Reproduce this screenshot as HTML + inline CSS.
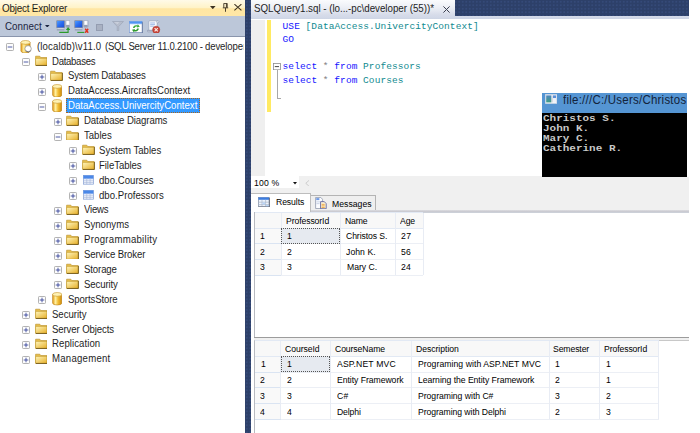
<!DOCTYPE html>
<html><head><meta charset="utf-8"><title>SQL Server Management Studio</title>
<style>
html,body{margin:0;padding:0;background:#fff;}
body{width:700px;height:433px;position:relative;overflow:hidden;}
#app>div,#app>svg,#app>span{position:absolute;display:block;}
.t{white-space:pre;line-height:14px;height:14px;transform-origin:0 50%;}
.s{font-family:"Liberation Sans", sans-serif;}
.m{font-family:"Liberation Mono", monospace;}
</style></head><body>
<svg width="0" height="0" style="position:absolute"><defs>
<linearGradient id="gf" x1="0" y1="0" x2="1" y2="1"><stop offset="0" stop-color="#fff6bd"/><stop offset="1" stop-color="#e6ae26"/></linearGradient>
<linearGradient id="gs" x1="0" y1="0" x2="1" y2="1"><stop offset="0" stop-color="#4c9cff"/><stop offset=".5" stop-color="#2a6cf0"/><stop offset="1" stop-color="#1a4fd8"/></linearGradient>
<linearGradient id="gc" x1="0" y1="0" x2="0" y2="1"><stop offset="0" stop-color="#4f86c0"/><stop offset="1" stop-color="#3f9c84"/></linearGradient>
<linearGradient id="gd" x1="0" y1="0" x2="1" y2="0"><stop offset="0" stop-color="#e39a14"/><stop offset=".32" stop-color="#fff0a0"/><stop offset=".6" stop-color="#f2bd34"/><stop offset="1" stop-color="#cc8a0c"/></linearGradient>
<g id="folder"><path d="M6 12h42l10 14h64v78H6z" fill="#e9c04d" stroke="#b48a22" stroke-width="6"/><path d="M6 34h116v70H6z" fill="url(#gf)" stroke="#c39a2c" stroke-width="6"/><path d="M124 30v76H10" fill="none" stroke="#5a4412" stroke-width="7"/></g>
<g id="db"><path d="M6 24v86a46 20 0 0 0 92 0V24z" fill="url(#gd)" stroke="#b8801a" stroke-width="6"/><ellipse cx="52" cy="24" rx="46" ry="19" fill="#fff2b4" stroke="#c4922a" stroke-width="6"/></g>
<g id="table"><rect x="4" y="4" width="96" height="82" fill="#f4f7fd" stroke="#86a0d4" stroke-width="7"/><rect x="4" y="4" width="96" height="32" fill="#4a88e8"/><path d="M4 36h96" stroke="#9fc0f5" stroke-width="6"/><path d="M4 54h96M4 70h96M36 30v56M68 30v56" stroke="#a5b6da" stroke-width="6"/></g>
</defs></svg>
<div id="app">
<div style="left:0.00px;top:0.00px;width:245.70px;height:15.70px;background:linear-gradient(#fffae8 0%,#fff3c8 47%,#ffe6a3 55%,#ffe7a6 100%);"></div>
<div style="left:0.00px;top:15.70px;width:245.70px;height:21.10px;background:#bcc7d9;"></div>
<div style="left:0.00px;top:36.30px;width:245.70px;height:1.20px;background:linear-gradient(#7a86a0,#9aa4b8);"></div>
<div style="left:0.00px;top:37.30px;width:245.20px;height:396.00px;background:#fff;"></div>
<svg style="left:45.2px;top:24.6px" width="4.6" height="2.6" viewBox="0 0 46 26"><path d="M0 0h46L23 26z" fill="#1b2540"/></svg>
<svg style="left:210px;top:5.7px" width="5.6" height="3.2" viewBox="0 0 56 32"><path d="M0 0h56L28 32z" fill="#3d3222"/></svg>
<svg style="left:221.6px;top:3.4px" width="7" height="9" viewBox="0 0 70 86" preserveAspectRatio="none"><path d="M18 4h34v40M18 4v40M8 46h54M35 46v38M44 4v40" fill="none" stroke="#3d3222" stroke-width="9"/></svg>
<svg style="left:234.2px;top:4.2px" width="7.8" height="6.6" viewBox="0 0 78 66"><path d="M4 2L74 64M74 2L4 64" fill="none" stroke="#3d3222" stroke-width="11"/></svg>
<svg style="left:56.0px;top:19.6px" width="14.4" height="13.4" viewBox="0 0 144 134"><rect x="3" y="3" width="86" height="80" rx="7" fill="#7e89a3"/><rect x="11" y="10" width="70" height="63" fill="url(#gs)"/><rect x="14" y="84" width="64" height="9" fill="#e3e6ee"/><rect x="8" y="93" width="76" height="11" fill="#8e98ad"/><rect x="97" y="3" width="43" height="68" rx="6" fill="#e3e7ef" stroke="#8c96ac" stroke-width="6"/><rect x="108" y="12" width="20" height="32" fill="#fff"/><rect x="101" y="52" width="35" height="15" fill="#7f8aa4"/><path d="M33 124H121V96" fill="none" stroke="#2b9a2b" stroke-width="11"/><path d="M98 99L121 70 144 99z" fill="#2b9a2b"/></svg>
<svg style="left:74.4px;top:19.6px" width="14.4" height="13.4" viewBox="0 0 144 134"><rect x="3" y="3" width="86" height="80" rx="7" fill="#7e89a3"/><rect x="11" y="10" width="70" height="63" fill="url(#gs)"/><rect x="14" y="84" width="64" height="9" fill="#e3e6ee"/><rect x="8" y="93" width="76" height="11" fill="#8e98ad"/><rect x="97" y="3" width="43" height="68" rx="6" fill="#e3e7ef" stroke="#8c96ac" stroke-width="6"/><rect x="108" y="12" width="20" height="32" fill="#fff"/><rect x="101" y="52" width="35" height="15" fill="#7f8aa4"/><path d="M33 124H104" fill="none" stroke="#2b9a2b" stroke-width="11"/><path d="M112 88l30 40M142 88l-30 40" stroke="#e3301c" stroke-width="14"/></svg>
<div style="left:95.60px;top:23.70px;width:7.30px;height:7.00px;background:#a9b1c2;border:1px solid #949db1;box-sizing:border-box"></div>
<svg style="left:111.6px;top:20.9px" width="12" height="10.6" viewBox="0 0 120 106"><path d="M5 5h110L68 54v42l-16 6V54z" fill="#b6bdcc" stroke="#9aa3b6" stroke-width="6"/><path d="M22 12h50L56 30z" fill="#cfd5e0"/></svg>
<svg style="left:129.2px;top:20.5px" width="13.8" height="12.4" viewBox="0 0 138 124"><rect x="4" y="4" width="128" height="114" fill="#fff" stroke="#7f9fd8" stroke-width="7"/><rect x="4" y="4" width="128" height="24" fill="#4f94f2"/><path d="M4 30h128" stroke="#9cc2f8" stroke-width="5"/><path d="M134 12v108H8" fill="none" stroke="#5d6c8c" stroke-width="7"/><path d="M40 70c0-22 22-34 44-26l4-12 20 26-30 8 4-10c-12-4-24 2-26 14z" fill="#39a83a"/><path d="M98 76c0 22-22 34-44 26l-4 12-20-26 30-8-4 10c12 4 24-2 26-14z" fill="#2f9a30"/></svg>
<svg style="left:147.4px;top:19.8px" width="13.6" height="13.2" viewBox="0 0 136 132"><path d="M24 8h84c14 0 16 18 2 20h-8v76H18V30c0-12 0-22 6-22z" fill="#f6f8fc" stroke="#8f9ab2" stroke-width="6"/><path d="M102 28c-10-4-8-20 6-20" fill="none" stroke="#8f9ab2" stroke-width="6"/><path d="M32 30h48M32 46h48M32 62h36" stroke="#7ea2e0" stroke-width="7"/><path d="M4 104h92c6 0 6 14 0 14H12c-8 0-12-6-8-14z" fill="#dfe4ee" stroke="#7f8aa3" stroke-width="6"/><circle cx="92" cy="98" r="36" fill="#c8453a" stroke="#a93226" stroke-width="5"/><path d="M76 82l32 32M108 82l-32 32" stroke="#fbe9e4" stroke-width="12"/></svg>
<svg style="left:6.25px;top:43.20px" width="8" height="8" viewBox="0 0 80 80"><rect x="5" y="5" width="70" height="70" rx="8" fill="#fdfdfd" stroke="#a0a0a0" stroke-width="8"/><path d="M17 40h46" stroke="#1a2a8c" stroke-width="7.5"/></svg>
<svg style="left:20.15px;top:39.60px" width="12.6" height="13.4" viewBox="0 0 120 134"><use href="#db"/><circle cx="78" cy="88" r="32" fill="#fff" stroke="#888" stroke-width="7"/><path d="M56 108a32 32 0 0 0 46 0" fill="none" stroke="#666" stroke-width="8"/></svg>
<svg style="left:22.00px;top:58.09px" width="8" height="8" viewBox="0 0 80 80"><rect x="5" y="5" width="70" height="70" rx="8" fill="#fdfdfd" stroke="#a0a0a0" stroke-width="8"/><path d="M17 40h46" stroke="#1a2a8c" stroke-width="7.5"/></svg>
<svg style="left:34.65px;top:55.09px" width="12.8" height="10.9" viewBox="0 0 128 110" preserveAspectRatio="none"><use href="#folder"/></svg>
<svg style="left:37.75px;top:72.97px" width="8" height="8" viewBox="0 0 80 80"><rect x="5" y="5" width="70" height="70" rx="8" fill="#fdfdfd" stroke="#a0a0a0" stroke-width="8"/><path d="M17 40h46M40 17v46" stroke="#1a2a8c" stroke-width="7.5"/></svg>
<svg style="left:50.35px;top:69.97px" width="12.8" height="10.9" viewBox="0 0 128 110" preserveAspectRatio="none"><use href="#folder"/></svg>
<svg style="left:37.75px;top:87.86px" width="8" height="8" viewBox="0 0 80 80"><rect x="5" y="5" width="70" height="70" rx="8" fill="#fdfdfd" stroke="#a0a0a0" stroke-width="8"/><path d="M17 40h46M40 17v46" stroke="#1a2a8c" stroke-width="7.5"/></svg>
<svg style="left:51.55px;top:83.91px" width="10.4" height="13.4" viewBox="0 0 104 134"><use href="#db"/></svg>
<svg style="left:37.75px;top:102.74px" width="8" height="8" viewBox="0 0 80 80"><rect x="5" y="5" width="70" height="70" rx="8" fill="#fdfdfd" stroke="#a0a0a0" stroke-width="8"/><path d="M17 40h46" stroke="#1a2a8c" stroke-width="7.5"/></svg>
<svg style="left:51.55px;top:98.79px" width="10.4" height="13.4" viewBox="0 0 104 134"><use href="#db"/></svg>
<div style="left:66.00px;top:98.10px;width:133.60px;height:15.00px;background:#3399ff;outline:1px dotted #a8651e;outline-offset:-1px"></div>
<svg style="left:53.50px;top:117.62px" width="8" height="8" viewBox="0 0 80 80"><rect x="5" y="5" width="70" height="70" rx="8" fill="#fdfdfd" stroke="#a0a0a0" stroke-width="8"/><path d="M17 40h46M40 17v46" stroke="#1a2a8c" stroke-width="7.5"/></svg>
<svg style="left:66.05px;top:114.62px" width="12.8" height="10.9" viewBox="0 0 128 110" preserveAspectRatio="none"><use href="#folder"/></svg>
<svg style="left:53.50px;top:132.51px" width="8" height="8" viewBox="0 0 80 80"><rect x="5" y="5" width="70" height="70" rx="8" fill="#fdfdfd" stroke="#a0a0a0" stroke-width="8"/><path d="M17 40h46" stroke="#1a2a8c" stroke-width="7.5"/></svg>
<svg style="left:66.05px;top:129.51px" width="12.8" height="10.9" viewBox="0 0 128 110" preserveAspectRatio="none"><use href="#folder"/></svg>
<svg style="left:69.25px;top:147.39px" width="8" height="8" viewBox="0 0 80 80"><rect x="5" y="5" width="70" height="70" rx="8" fill="#fdfdfd" stroke="#a0a0a0" stroke-width="8"/><path d="M17 40h46M40 17v46" stroke="#1a2a8c" stroke-width="7.5"/></svg>
<svg style="left:81.75px;top:144.39px" width="12.8" height="10.9" viewBox="0 0 128 110" preserveAspectRatio="none"><use href="#folder"/></svg>
<svg style="left:69.25px;top:162.28px" width="8" height="8" viewBox="0 0 80 80"><rect x="5" y="5" width="70" height="70" rx="8" fill="#fdfdfd" stroke="#a0a0a0" stroke-width="8"/><path d="M17 40h46M40 17v46" stroke="#1a2a8c" stroke-width="7.5"/></svg>
<svg style="left:81.75px;top:159.28px" width="12.8" height="10.9" viewBox="0 0 128 110" preserveAspectRatio="none"><use href="#folder"/></svg>
<svg style="left:69.25px;top:177.17px" width="8" height="8" viewBox="0 0 80 80"><rect x="5" y="5" width="70" height="70" rx="8" fill="#fdfdfd" stroke="#a0a0a0" stroke-width="8"/><path d="M17 40h46M40 17v46" stroke="#1a2a8c" stroke-width="7.5"/></svg>
<svg style="left:82.95px;top:175.07px" width="10.8" height="9.6" viewBox="0 0 104 90" preserveAspectRatio="none"><use href="#table"/></svg>
<svg style="left:69.25px;top:192.05px" width="8" height="8" viewBox="0 0 80 80"><rect x="5" y="5" width="70" height="70" rx="8" fill="#fdfdfd" stroke="#a0a0a0" stroke-width="8"/><path d="M17 40h46M40 17v46" stroke="#1a2a8c" stroke-width="7.5"/></svg>
<svg style="left:82.95px;top:189.95px" width="10.8" height="9.6" viewBox="0 0 104 90" preserveAspectRatio="none"><use href="#table"/></svg>
<svg style="left:53.50px;top:206.94px" width="8" height="8" viewBox="0 0 80 80"><rect x="5" y="5" width="70" height="70" rx="8" fill="#fdfdfd" stroke="#a0a0a0" stroke-width="8"/><path d="M17 40h46M40 17v46" stroke="#1a2a8c" stroke-width="7.5"/></svg>
<svg style="left:66.05px;top:203.94px" width="12.8" height="10.9" viewBox="0 0 128 110" preserveAspectRatio="none"><use href="#folder"/></svg>
<svg style="left:53.50px;top:221.82px" width="8" height="8" viewBox="0 0 80 80"><rect x="5" y="5" width="70" height="70" rx="8" fill="#fdfdfd" stroke="#a0a0a0" stroke-width="8"/><path d="M17 40h46M40 17v46" stroke="#1a2a8c" stroke-width="7.5"/></svg>
<svg style="left:66.05px;top:218.82px" width="12.8" height="10.9" viewBox="0 0 128 110" preserveAspectRatio="none"><use href="#folder"/></svg>
<svg style="left:53.50px;top:236.70px" width="8" height="8" viewBox="0 0 80 80"><rect x="5" y="5" width="70" height="70" rx="8" fill="#fdfdfd" stroke="#a0a0a0" stroke-width="8"/><path d="M17 40h46M40 17v46" stroke="#1a2a8c" stroke-width="7.5"/></svg>
<svg style="left:66.05px;top:233.70px" width="12.8" height="10.9" viewBox="0 0 128 110" preserveAspectRatio="none"><use href="#folder"/></svg>
<svg style="left:53.50px;top:251.59px" width="8" height="8" viewBox="0 0 80 80"><rect x="5" y="5" width="70" height="70" rx="8" fill="#fdfdfd" stroke="#a0a0a0" stroke-width="8"/><path d="M17 40h46M40 17v46" stroke="#1a2a8c" stroke-width="7.5"/></svg>
<svg style="left:66.05px;top:248.59px" width="12.8" height="10.9" viewBox="0 0 128 110" preserveAspectRatio="none"><use href="#folder"/></svg>
<svg style="left:53.50px;top:266.48px" width="8" height="8" viewBox="0 0 80 80"><rect x="5" y="5" width="70" height="70" rx="8" fill="#fdfdfd" stroke="#a0a0a0" stroke-width="8"/><path d="M17 40h46M40 17v46" stroke="#1a2a8c" stroke-width="7.5"/></svg>
<svg style="left:66.05px;top:263.48px" width="12.8" height="10.9" viewBox="0 0 128 110" preserveAspectRatio="none"><use href="#folder"/></svg>
<svg style="left:53.50px;top:281.36px" width="8" height="8" viewBox="0 0 80 80"><rect x="5" y="5" width="70" height="70" rx="8" fill="#fdfdfd" stroke="#a0a0a0" stroke-width="8"/><path d="M17 40h46M40 17v46" stroke="#1a2a8c" stroke-width="7.5"/></svg>
<svg style="left:66.05px;top:278.36px" width="12.8" height="10.9" viewBox="0 0 128 110" preserveAspectRatio="none"><use href="#folder"/></svg>
<svg style="left:37.75px;top:296.25px" width="8" height="8" viewBox="0 0 80 80"><rect x="5" y="5" width="70" height="70" rx="8" fill="#fdfdfd" stroke="#a0a0a0" stroke-width="8"/><path d="M17 40h46M40 17v46" stroke="#1a2a8c" stroke-width="7.5"/></svg>
<svg style="left:51.55px;top:292.30px" width="10.4" height="13.4" viewBox="0 0 104 134"><use href="#db"/></svg>
<svg style="left:22.00px;top:311.13px" width="8" height="8" viewBox="0 0 80 80"><rect x="5" y="5" width="70" height="70" rx="8" fill="#fdfdfd" stroke="#a0a0a0" stroke-width="8"/><path d="M17 40h46M40 17v46" stroke="#1a2a8c" stroke-width="7.5"/></svg>
<svg style="left:34.65px;top:308.13px" width="12.8" height="10.9" viewBox="0 0 128 110" preserveAspectRatio="none"><use href="#folder"/></svg>
<svg style="left:22.00px;top:326.01px" width="8" height="8" viewBox="0 0 80 80"><rect x="5" y="5" width="70" height="70" rx="8" fill="#fdfdfd" stroke="#a0a0a0" stroke-width="8"/><path d="M17 40h46M40 17v46" stroke="#1a2a8c" stroke-width="7.5"/></svg>
<svg style="left:34.65px;top:323.01px" width="12.8" height="10.9" viewBox="0 0 128 110" preserveAspectRatio="none"><use href="#folder"/></svg>
<svg style="left:22.00px;top:340.90px" width="8" height="8" viewBox="0 0 80 80"><rect x="5" y="5" width="70" height="70" rx="8" fill="#fdfdfd" stroke="#a0a0a0" stroke-width="8"/><path d="M17 40h46M40 17v46" stroke="#1a2a8c" stroke-width="7.5"/></svg>
<svg style="left:34.65px;top:337.90px" width="12.8" height="10.9" viewBox="0 0 128 110" preserveAspectRatio="none"><use href="#folder"/></svg>
<svg style="left:22.00px;top:355.78px" width="8" height="8" viewBox="0 0 80 80"><rect x="5" y="5" width="70" height="70" rx="8" fill="#fdfdfd" stroke="#a0a0a0" stroke-width="8"/><path d="M17 40h46M40 17v46" stroke="#1a2a8c" stroke-width="7.5"/></svg>
<svg style="left:34.65px;top:352.78px" width="12.8" height="10.9" viewBox="0 0 128 110" preserveAspectRatio="none"><use href="#folder"/></svg>
<div style="left:245.30px;top:0.00px;width:5.60px;height:433.00px;background:radial-gradient(circle,#354a79 0.6px,rgba(53,74,121,0) 1.1px) 0 0/3.5px 3.5px,#2d4069;"></div>
<div style="left:251.00px;top:0.00px;width:438.30px;height:16.10px;background:radial-gradient(circle,#354a79 0.6px,rgba(53,74,121,0) 1.1px) 0 0/3.5px 3.5px,#2d4069;"></div>
<div style="left:251.00px;top:16.10px;width:438.30px;height:3.40px;background:linear-gradient(#d6dcea,#cdd4e4);"></div>
<div style="left:251.00px;top:0.00px;width:203.90px;height:16.60px;background:linear-gradient(#fafbfd 0%,#eceff5 45%,#d6dbe9 88%,#d3d9e8 100%);"></div>
<svg style="left:443.4px;top:5.8px" width="7" height="7" viewBox="0 0 70 70"><path d="M4 4l62 62M66 4L4 66" stroke="#3a3f4f" stroke-width="10"/></svg>
<div style="left:251.00px;top:19.50px;width:438.30px;height:156.60px;background:#fff;"></div>
<div style="left:251.00px;top:19.50px;width:13.60px;height:156.20px;background:#efefef;"></div>
<div style="left:266.70px;top:19.50px;width:4.40px;height:92.00px;background:#ffea62;"></div>
<svg style="left:273px;top:63px" width="7.8" height="7.2" viewBox="0 0 78 72"><rect x="4" y="4" width="70" height="64" fill="#fff" stroke="#8c8c8c" stroke-width="8"/><path d="M18 36h42" stroke="#333" stroke-width="9"/></svg>
<div style="left:277.00px;top:70.00px;width:0.90px;height:28.80px;background:#a8a8a8;"></div>
<div style="left:277.00px;top:98.00px;width:3.80px;height:0.90px;background:#a8a8a8;"></div>
<div style="left:542.00px;top:93.10px;width:144.60px;height:19.60px;background:#5595d3;"></div>
<div style="left:542.00px;top:112.60px;width:144.60px;height:64.10px;background:#000;"></div>
<svg style="left:544.6px;top:93.9px" width="12.2" height="9.9" viewBox="0 0 122 99"><rect x="3" y="3" width="116" height="93" fill="#f4f6fa" stroke="#c9d2e0" stroke-width="6"/><rect x="12" y="14" width="52" height="70" fill="url(#gc)"/><rect x="68" y="14" width="8" height="70" fill="#c9ccd4"/><rect x="80" y="14" width="30" height="28" fill="#5b8fd8"/><rect x="80" y="42" width="30" height="42" fill="#eef2f8"/></svg>
<div style="left:251.00px;top:176.10px;width:291.00px;height:12.00px;background:#f0f0f0;"></div>
<div style="left:542.00px;top:176.60px;width:147.30px;height:11.50px;background:#f0f0f0;"></div>
<div style="left:251.00px;top:176.40px;width:48.30px;height:11.50px;background:#fff;"></div>
<svg style="left:292.9px;top:182.2px" width="4" height="2.4" viewBox="0 0 40 24"><path d="M0 0h40L20 24z" fill="#111"/></svg>
<svg style="left:305.4px;top:179.6px" width="4.4" height="6.6" viewBox="0 0 44 66"><path d="M40 4L8 33l32 29" fill="none" stroke="#c3c3c3" stroke-width="8"/></svg>
<div style="left:251.00px;top:188.00px;width:438.30px;height:24.40px;background:#f0f0f0;"></div>
<div style="left:251.00px;top:193.20px;width:59.70px;height:19.20px;background:#fff;border:1px solid #bdbdbd;border-left:none;border-bottom:none;box-sizing:border-box"></div>
<div style="left:310.70px;top:194.90px;width:65.20px;height:16.50px;background:#efefef;border:1px solid #b4b4b4;border-left:none;border-bottom:none;box-sizing:border-box"></div>
<div style="left:310.70px;top:210.40px;width:378.60px;height:2.60px;background:linear-gradient(#dcdce0,#c8c8cf 60%,#d8d8dc);"></div>
<svg style="left:258.2px;top:196.5px" width="11.8" height="10.6" viewBox="0 0 118 106"><rect x="4" y="4" width="108" height="94" fill="#eef4fd" stroke="#8c96aa" stroke-width="8"/><rect x="4" y="4" width="108" height="24" fill="#3c7de0"/><path d="M4 52h108M4 76h108M40 28v70M76 28v70" stroke="#a9b4c8" stroke-width="7"/><rect x="44" y="56" width="28" height="16" fill="#b9d6fa"/><rect x="80" y="80" width="28" height="14" fill="#b9d6fa"/><path d="M114 10v90H8" fill="none" stroke="#5b6170" stroke-width="8"/></svg>
<svg style="left:315.3px;top:196.9px" width="11.8" height="12.2" viewBox="0 0 114 110" preserveAspectRatio="none"><path d="M6 4h50l16 16v84H6z" fill="#fbfcff" stroke="#8a93a8" stroke-width="7"/><rect x="12" y="10" width="30" height="18" fill="#6f9be6"/><path d="M14 44h36M14 60h30" stroke="#b8c4dc" stroke-width="7"/><path d="M54 42h36l18 18v46H54z" fill="#fff6d6" stroke="#5a5f9a" stroke-width="8"/><path d="M64 66h30M64 80h30M64 94h30" stroke="#e89a32" stroke-width="8"/></svg>
<div style="left:251.00px;top:212.30px;width:438.30px;height:125.00px;background:#fff;"></div>
<div style="left:254.00px;top:212.10px;width:1.00px;height:125.00px;background:#b8bac0;"></div>
<div style="left:254.90px;top:212.10px;width:434.40px;height:0.80px;background:#ccd0d8;"></div>
<div style="left:254.90px;top:212.60px;width:168.10px;height:15.60px;background:#f8f8f8;"></div>
<div style="left:254.90px;top:228.20px;width:26.10px;height:46.80px;background:#f9f9f9;"></div>
<div style="left:254.90px;top:212.20px;width:168.10px;height:0.90px;background:#e2e9f4;"></div>
<div style="left:254.90px;top:227.80px;width:168.10px;height:0.90px;background:#e2e9f4;"></div>
<div style="left:254.90px;top:243.40px;width:168.10px;height:0.90px;background:#eceff5;"></div>
<div style="left:254.90px;top:243.40px;width:26.10px;height:0.90px;background:#dae4f2;"></div>
<div style="left:254.90px;top:259.00px;width:168.10px;height:0.90px;background:#eceff5;"></div>
<div style="left:254.90px;top:259.00px;width:26.10px;height:0.90px;background:#dae4f2;"></div>
<div style="left:254.90px;top:274.60px;width:168.10px;height:0.90px;background:#eceff5;"></div>
<div style="left:254.90px;top:274.60px;width:26.10px;height:0.90px;background:#dae4f2;"></div>
<div style="left:280.60px;top:212.60px;width:0.90px;height:62.40px;background:#e8ecf4;"></div>
<div style="left:340.10px;top:212.60px;width:0.90px;height:62.40px;background:#e8ecf4;"></div>
<div style="left:394.80px;top:212.60px;width:0.90px;height:62.40px;background:#e8ecf4;"></div>
<div style="left:422.60px;top:212.60px;width:0.90px;height:62.40px;background:#e8ecf4;"></div>
<div style="left:280.80px;top:227.70px;width:59.70px;height:16.20px;background:#e6eaf0;outline:1px dotted #555;outline-offset:-1px"></div>
<div style="left:254.00px;top:336.90px;width:435.30px;height:3.60px;background:#f0f0f0;"></div>
<div style="left:254.00px;top:337.00px;width:435.30px;height:0.90px;background:#9c9c9c;"></div>
<div style="left:254.00px;top:340.20px;width:435.30px;height:0.80px;background:#c8c8c8;"></div>
<div style="left:251.00px;top:341.00px;width:438.30px;height:92.00px;background:#fff;"></div>
<div style="left:254.00px;top:341.00px;width:1.00px;height:92.00px;background:#b8bac0;"></div>
<div style="left:254.90px;top:340.60px;width:403.90px;height:15.72px;background:#f8f8f8;"></div>
<div style="left:254.90px;top:356.32px;width:25.85px;height:62.88px;background:#f9f9f9;"></div>
<div style="left:254.90px;top:340.20px;width:403.90px;height:0.90px;background:#e2e9f4;"></div>
<div style="left:254.90px;top:355.92px;width:403.90px;height:0.90px;background:#e2e9f4;"></div>
<div style="left:254.90px;top:371.64px;width:403.90px;height:0.90px;background:#eceff5;"></div>
<div style="left:254.90px;top:371.64px;width:25.85px;height:0.90px;background:#dae4f2;"></div>
<div style="left:254.90px;top:387.36px;width:403.90px;height:0.90px;background:#eceff5;"></div>
<div style="left:254.90px;top:387.36px;width:25.85px;height:0.90px;background:#dae4f2;"></div>
<div style="left:254.90px;top:403.08px;width:403.90px;height:0.90px;background:#eceff5;"></div>
<div style="left:254.90px;top:403.08px;width:25.85px;height:0.90px;background:#dae4f2;"></div>
<div style="left:254.90px;top:418.80px;width:403.90px;height:0.90px;background:#eceff5;"></div>
<div style="left:254.90px;top:418.80px;width:25.85px;height:0.90px;background:#dae4f2;"></div>
<div style="left:280.35px;top:340.60px;width:0.90px;height:78.60px;background:#e8ecf4;"></div>
<div style="left:330.10px;top:340.60px;width:0.90px;height:78.60px;background:#e8ecf4;"></div>
<div style="left:410.60px;top:340.60px;width:0.90px;height:78.60px;background:#e8ecf4;"></div>
<div style="left:548.60px;top:340.60px;width:0.90px;height:78.60px;background:#e8ecf4;"></div>
<div style="left:598.90px;top:340.60px;width:0.90px;height:78.60px;background:#e8ecf4;"></div>
<div style="left:658.40px;top:340.60px;width:0.90px;height:78.60px;background:#e8ecf4;"></div>
<div style="left:280.55px;top:355.82px;width:49.95px;height:16.32px;background:#e6eaf0;outline:1px dotted #555;outline-offset:-1px"></div>
<span class="t s" style="left:1.50px;top:1.50px;font-size:10.3px;color:#1e1e1e;transform:scaleX(0.96);letter-spacing:-0.217px;">Object Explorer</span>
<span class="t s" style="left:5.00px;top:20.10px;font-size:10.2px;color:#1b2540;transform:scaleX(0.96);letter-spacing:0.054px;">Connect</span>
<span class="t s" style="left:36.70px;top:39.70px;font-size:10px;color:#1e1e1e;transform:scaleX(0.96);letter-spacing:0.141px;">(localdb)\v11.0</span>
<span class="t s" style="left:104.70px;top:39.70px;font-size:10px;color:#1e1e1e;transform:scaleX(0.96);letter-spacing:-0.269px;">(SQL Server 11.0.2100 -</span>
<span class="t s" style="left:205.40px;top:39.70px;font-size:10px;color:#1e1e1e;transform:scaleX(0.96);letter-spacing:-0.126px;width:39.8px;overflow:hidden;">developer-pc\developer)</span>
<span class="t s" style="left:52.30px;top:54.59px;font-size:10px;color:#1e1e1e;transform:scaleX(0.96);letter-spacing:-0.312px;">Databases</span>
<span class="t s" style="left:68.00px;top:69.47px;font-size:10px;color:#1e1e1e;transform:scaleX(0.96);letter-spacing:-0.194px;">System Databases</span>
<span class="t s" style="left:68.00px;top:84.36px;font-size:10px;color:#1e1e1e;transform:scaleX(0.96);letter-spacing:-0.003px;">DataAccess.AircraftsContext</span>
<span class="t s" style="left:68.00px;top:99.24px;font-size:10px;color:#fff;transform:scaleX(0.96);letter-spacing:0.007px;">DataAccess.UnivercityContext</span>
<span class="t s" style="left:83.70px;top:114.12px;font-size:10px;color:#1e1e1e;transform:scaleX(0.96);letter-spacing:-0.094px;">Database Diagrams</span>
<span class="t s" style="left:83.70px;top:129.01px;font-size:10px;color:#1e1e1e;transform:scaleX(0.96);letter-spacing:-0.009px;">Tables</span>
<span class="t s" style="left:99.40px;top:143.89px;font-size:10px;color:#1e1e1e;transform:scaleX(0.96);letter-spacing:-0.004px;">System Tables</span>
<span class="t s" style="left:99.40px;top:158.78px;font-size:10px;color:#1e1e1e;transform:scaleX(0.96);letter-spacing:-0.066px;">FileTables</span>
<span class="t s" style="left:99.40px;top:173.67px;font-size:10px;color:#1e1e1e;transform:scaleX(0.96);letter-spacing:0.016px;">dbo.Courses</span>
<span class="t s" style="left:99.40px;top:188.55px;font-size:10px;color:#1e1e1e;transform:scaleX(0.96);letter-spacing:0.017px;">dbo.Professors</span>
<span class="t s" style="left:83.70px;top:203.44px;font-size:10px;color:#1e1e1e;transform:scaleX(0.96);letter-spacing:-0.217px;">Views</span>
<span class="t s" style="left:83.70px;top:218.32px;font-size:10px;color:#1e1e1e;transform:scaleX(0.96);letter-spacing:0.023px;">Synonyms</span>
<span class="t s" style="left:83.70px;top:233.20px;font-size:10px;color:#1e1e1e;transform:scaleX(0.96);letter-spacing:0.274px;">Programmability</span>
<span class="t s" style="left:83.70px;top:248.09px;font-size:10px;color:#1e1e1e;transform:scaleX(0.96);letter-spacing:-0.123px;">Service Broker</span>
<span class="t s" style="left:83.70px;top:262.98px;font-size:10px;color:#1e1e1e;transform:scaleX(0.96);letter-spacing:-0.124px;">Storage</span>
<span class="t s" style="left:83.70px;top:277.86px;font-size:10px;color:#1e1e1e;transform:scaleX(0.96);letter-spacing:-0.115px;">Security</span>
<span class="t s" style="left:68.00px;top:292.75px;font-size:10px;color:#1e1e1e;transform:scaleX(0.96);letter-spacing:-0.104px;">SportsStore</span>
<span class="t s" style="left:52.30px;top:307.63px;font-size:10px;color:#1e1e1e;transform:scaleX(0.96);letter-spacing:-0.036px;">Security</span>
<span class="t s" style="left:52.30px;top:322.51px;font-size:10px;color:#1e1e1e;transform:scaleX(0.96);letter-spacing:-0.111px;">Server Objects</span>
<span class="t s" style="left:52.30px;top:337.40px;font-size:10px;color:#1e1e1e;transform:scaleX(0.96);letter-spacing:0.066px;">Replication</span>
<span class="t s" style="left:52.30px;top:352.28px;font-size:10px;color:#1e1e1e;transform:scaleX(0.96);letter-spacing:0.256px;">Management</span>
<span class="t s" style="left:254.30px;top:2.10px;font-size:10.2px;color:#1e1e1e;transform:scaleX(0.96);letter-spacing:-0.025px;">SQLQuery1.sql - (lo...-pc\developer (55))*</span>
<span class="t m" style="left:282.60px;top:20.40px;font-size:9.5px;color:#1414ff;letter-spacing:0.07px;">USE</span>
<span class="t m" style="left:305.60px;top:20.40px;font-size:9.5px;color:#108a8f;letter-spacing:0.07px;">[DataAccess.UnivercityContext]</span>
<span class="t m" style="left:282.60px;top:33.40px;font-size:9.5px;color:#1414ff;letter-spacing:0.07px;">GO</span>
<span class="t m" style="left:282.60px;top:60.40px;font-size:9.5px;color:#1414ff;letter-spacing:0.07px;">select</span>
<span class="t m" style="left:322.85px;top:60.40px;font-size:9.5px;color:#7f7f7f;letter-spacing:0.07px;">*</span>
<span class="t m" style="left:334.35px;top:60.40px;font-size:9.5px;color:#1414ff;letter-spacing:0.07px;">from</span>
<span class="t m" style="left:363.10px;top:60.40px;font-size:9.5px;color:#108a8f;letter-spacing:0.07px;">Professors</span>
<span class="t m" style="left:282.60px;top:74.20px;font-size:9.5px;color:#1414ff;letter-spacing:0.07px;">select</span>
<span class="t m" style="left:322.85px;top:74.20px;font-size:9.5px;color:#7f7f7f;letter-spacing:0.07px;">*</span>
<span class="t m" style="left:334.35px;top:74.20px;font-size:9.5px;color:#1414ff;letter-spacing:0.07px;">from</span>
<span class="t m" style="left:363.10px;top:74.20px;font-size:9.5px;color:#108a8f;letter-spacing:0.07px;">Courses</span>
<span class="t s" style="left:562.50px;top:92.60px;font-size:12.2px;color:#13233a;transform:scaleX(0.94);letter-spacing:0.267px;">file:///C:/Users/Christos</span>
<span class="t m" style="left:543.20px;top:111.50px;font-size:9px;color:#c8c8c8;font-weight:bold;transform:scaleX(1.22);">Christos S.</span>
<span class="t m" style="left:543.20px;top:121.50px;font-size:9px;color:#c8c8c8;font-weight:bold;transform:scaleX(1.22);">John K.</span>
<span class="t m" style="left:543.20px;top:131.50px;font-size:9px;color:#c8c8c8;font-weight:bold;transform:scaleX(1.22);">Mary C.</span>
<span class="t m" style="left:543.20px;top:141.50px;font-size:9px;color:#c8c8c8;font-weight:bold;transform:scaleX(1.22);">Catherine R.</span>
<span class="t s" style="left:253.60px;top:176.00px;font-size:9.6px;color:#000;transform:scaleX(0.9);letter-spacing:0.182px;">100 %</span>
<span class="t s" style="left:275.70px;top:195.00px;font-size:9.6px;color:#000;transform:scaleX(0.9);letter-spacing:-0.095px;">Results</span>
<span class="t s" style="left:332.40px;top:196.70px;font-size:9.6px;color:#000;transform:scaleX(0.9);letter-spacing:0.033px;">Messages</span>
<span class="t s" style="left:285.50px;top:213.60px;font-size:9.6px;color:#000;transform:scaleX(0.9);letter-spacing:-0.107px;">ProfessorId</span>
<span class="t s" style="left:345.40px;top:213.60px;font-size:9.6px;color:#000;transform:scaleX(0.9);letter-spacing:-0.204px;">Name</span>
<span class="t s" style="left:399.70px;top:213.60px;font-size:9.6px;color:#000;transform:scaleX(0.9);letter-spacing:-0.137px;">Age</span>
<span class="t s" style="left:260.10px;top:229.20px;font-size:9.6px;color:#000;transform:scaleX(0.9);">1</span>
<span class="t s" style="left:287.20px;top:229.20px;font-size:9.6px;color:#000;transform:scaleX(0.9);">1</span>
<span class="t s" style="left:346.30px;top:229.20px;font-size:9.6px;color:#000;transform:scaleX(0.9);letter-spacing:-0.094px;">Christos S.</span>
<span class="t s" style="left:401.20px;top:229.20px;font-size:9.6px;color:#000;transform:scaleX(0.9);letter-spacing:0.386px;">27</span>
<span class="t s" style="left:260.00px;top:244.80px;font-size:9.6px;color:#000;transform:scaleX(0.9);">2</span>
<span class="t s" style="left:287.10px;top:244.80px;font-size:9.6px;color:#000;transform:scaleX(0.9);">2</span>
<span class="t s" style="left:346.20px;top:244.80px;font-size:9.6px;color:#000;transform:scaleX(0.9);letter-spacing:0.065px;">John K.</span>
<span class="t s" style="left:401.30px;top:244.80px;font-size:9.6px;color:#000;transform:scaleX(0.9);letter-spacing:0.220px;">56</span>
<span class="t s" style="left:260.00px;top:260.40px;font-size:9.6px;color:#000;transform:scaleX(0.9);">3</span>
<span class="t s" style="left:287.10px;top:260.40px;font-size:9.6px;color:#000;transform:scaleX(0.9);">3</span>
<span class="t s" style="left:346.60px;top:260.40px;font-size:9.6px;color:#000;transform:scaleX(0.9);letter-spacing:-0.003px;">Mary C.</span>
<span class="t s" style="left:401.30px;top:260.40px;font-size:9.6px;color:#000;transform:scaleX(0.9);letter-spacing:0.220px;">24</span>
<span class="t s" style="left:285.00px;top:341.66px;font-size:9.6px;color:#000;transform:scaleX(0.9);letter-spacing:-0.076px;">CourseId</span>
<span class="t s" style="left:335.00px;top:341.66px;font-size:9.6px;color:#000;transform:scaleX(0.9);letter-spacing:-0.098px;">CourseName</span>
<span class="t s" style="left:416.00px;top:341.66px;font-size:9.6px;color:#000;transform:scaleX(0.9);letter-spacing:-0.040px;">Description</span>
<span class="t s" style="left:552.90px;top:341.66px;font-size:9.6px;color:#000;transform:scaleX(0.9);letter-spacing:-0.119px;">Semester</span>
<span class="t s" style="left:604.20px;top:341.66px;font-size:9.6px;color:#000;transform:scaleX(0.9);letter-spacing:-0.107px;">ProfessorId</span>
<span class="t s" style="left:260.50px;top:357.38px;font-size:9.6px;color:#000;transform:scaleX(0.9);">1</span>
<span class="t s" style="left:287.40px;top:357.38px;font-size:9.6px;color:#000;transform:scaleX(0.9);">1</span>
<span class="t s" style="left:337.00px;top:357.38px;font-size:9.6px;color:#000;transform:scaleX(0.9);letter-spacing:0.150px;">ASP.NET MVC</span>
<span class="t s" style="left:417.60px;top:357.38px;font-size:9.6px;color:#000;transform:scaleX(0.9);letter-spacing:0.063px;">Programing with ASP.NET MVC</span>
<span class="t s" style="left:554.50px;top:357.38px;font-size:9.6px;color:#000;transform:scaleX(0.9);">1</span>
<span class="t s" style="left:606.00px;top:357.38px;font-size:9.6px;color:#000;transform:scaleX(0.9);">1</span>
<span class="t s" style="left:260.40px;top:373.10px;font-size:9.6px;color:#000;transform:scaleX(0.9);">2</span>
<span class="t s" style="left:287.30px;top:373.10px;font-size:9.6px;color:#000;transform:scaleX(0.9);">2</span>
<span class="t s" style="left:337.00px;top:373.10px;font-size:9.6px;color:#000;transform:scaleX(0.9);letter-spacing:-0.047px;">Entity Framework</span>
<span class="t s" style="left:417.60px;top:373.10px;font-size:9.6px;color:#000;transform:scaleX(0.9);letter-spacing:-0.045px;">Learning the Entity Framework</span>
<span class="t s" style="left:554.50px;top:373.10px;font-size:9.6px;color:#000;transform:scaleX(0.9);">2</span>
<span class="t s" style="left:606.00px;top:373.10px;font-size:9.6px;color:#000;transform:scaleX(0.9);">1</span>
<span class="t s" style="left:260.40px;top:388.82px;font-size:9.6px;color:#000;transform:scaleX(0.9);">3</span>
<span class="t s" style="left:287.30px;top:388.82px;font-size:9.6px;color:#000;transform:scaleX(0.9);">3</span>
<span class="t s" style="left:337.00px;top:388.82px;font-size:9.6px;color:#000;transform:scaleX(0.9);letter-spacing:0.395px;">C#</span>
<span class="t s" style="left:417.60px;top:388.82px;font-size:9.6px;color:#000;transform:scaleX(0.9);letter-spacing:-0.026px;">Programing with C#</span>
<span class="t s" style="left:554.70px;top:388.82px;font-size:9.6px;color:#000;transform:scaleX(0.9);">3</span>
<span class="t s" style="left:606.30px;top:388.82px;font-size:9.6px;color:#000;transform:scaleX(0.9);">2</span>
<span class="t s" style="left:260.40px;top:404.54px;font-size:9.6px;color:#000;transform:scaleX(0.9);">4</span>
<span class="t s" style="left:287.30px;top:404.54px;font-size:9.6px;color:#000;transform:scaleX(0.9);">4</span>
<span class="t s" style="left:337.00px;top:404.54px;font-size:9.6px;color:#000;transform:scaleX(0.9);letter-spacing:-0.136px;">Delphi</span>
<span class="t s" style="left:417.60px;top:404.54px;font-size:9.6px;color:#000;transform:scaleX(0.9);letter-spacing:-0.069px;">Programing with Delphi</span>
<span class="t s" style="left:554.70px;top:404.54px;font-size:9.6px;color:#000;transform:scaleX(0.9);">2</span>
<span class="t s" style="left:606.30px;top:404.54px;font-size:9.6px;color:#000;transform:scaleX(0.9);">3</span>
</div>
</body></html>
